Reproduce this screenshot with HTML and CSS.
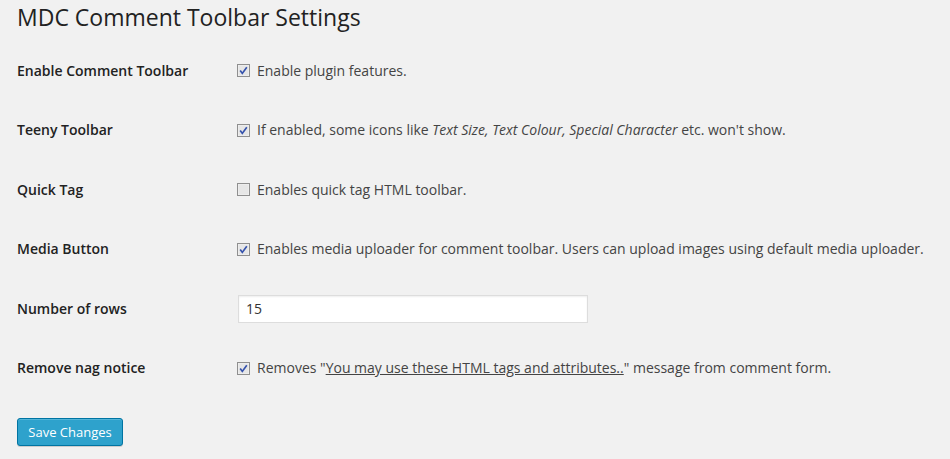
FILE: index.html
```html
<!DOCTYPE html>
<html>
<head>
<meta charset="utf-8">
<link rel="stylesheet" href="styles.css">
</head>
<body>
<div class="wrap">
  <h2 class="title">MDC Comment Toolbar Settings</h2>
  <div class="form">
    <div class="row">
      <div class="label">Enable Comment Toolbar</div>
      <div class="field">
        <svg class="cb" width="13" height="13" viewBox="0 0 13 13"><rect x="0.5" y="0.5" width="12" height="12" fill="#f2f2f2" stroke="#8f8f8f"/><rect x="1.5" y="1.5" width="10" height="10" fill="#e6e6e6"/><path d="M3.2 6.6 L5.3 9.4 L9.8 3.2" fill="none" stroke="#3552ac" stroke-width="1.7"/></svg>
        <span>Enable plugin features.</span>
      </div>
    </div>
    <div class="row">
      <div class="label">Teeny Toolbar</div>
      <div class="field">
        <svg class="cb" width="13" height="13" viewBox="0 0 13 13"><rect x="0.5" y="0.5" width="12" height="12" fill="#f2f2f2" stroke="#8f8f8f"/><rect x="1.5" y="1.5" width="10" height="10" fill="#e6e6e6"/><path d="M3.2 6.6 L5.3 9.4 L9.8 3.2" fill="none" stroke="#3552ac" stroke-width="1.7"/></svg>
        <span>If enabled, some icons like <em>Text Size, Text Colour, Special Character</em> etc. won't show.</span>
      </div>
    </div>
    <div class="row">
      <div class="label">Quick Tag</div>
      <div class="field">
        <svg class="cb" width="13" height="13" viewBox="0 0 13 13"><rect x="0.5" y="0.5" width="12" height="12" fill="#f2f2f2" stroke="#8f8f8f"/><rect x="1.5" y="1.5" width="10" height="10" fill="#e6e6e6"/></svg>
        <span>Enables quick tag HTML toolbar.</span>
      </div>
    </div>
    <div class="row">
      <div class="label">Media Button</div>
      <div class="field">
        <svg class="cb" width="13" height="13" viewBox="0 0 13 13"><rect x="0.5" y="0.5" width="12" height="12" fill="#f2f2f2" stroke="#8f8f8f"/><rect x="1.5" y="1.5" width="10" height="10" fill="#e6e6e6"/><path d="M3.2 6.6 L5.3 9.4 L9.8 3.2" fill="none" stroke="#3552ac" stroke-width="1.7"/></svg>
        <span>Enables media uploader for comment toolbar. Users can upload images using default media uploader.</span>
      </div>
    </div>
    <div class="row">
      <div class="label">Number of rows</div>
      <div class="field">
        <div class="input">15</div>
      </div>
    </div>
    <div class="row">
      <div class="label">Remove nag notice</div>
      <div class="field">
        <svg class="cb" width="13" height="13" viewBox="0 0 13 13"><rect x="0.5" y="0.5" width="12" height="12" fill="#f2f2f2" stroke="#8f8f8f"/><rect x="1.5" y="1.5" width="10" height="10" fill="#e6e6e6"/><path d="M3.2 6.6 L5.3 9.4 L9.8 3.2" fill="none" stroke="#3552ac" stroke-width="1.7"/></svg>
        <span>Removes "<a class="lnk" href="#">You may use these HTML tags and attributes..</a>" message from comment form.</span>
      </div>
    </div>
  </div>
  <div class="submit">
    <button class="btn">Save Changes</button>
  </div>
</div>
</body>
</html>
```
FILE: styles.css
```css
html, body {
  margin: 0;
  padding: 0;
  background: #f1f1f1;
}
body {
  font-family: "Open Sans", "Noto Sans", sans-serif;
  font-size: 14px;
  color: #444;
  width: 950px;
  height: 459px;
  overflow: hidden;
}
.wrap {
  padding-left: 17px;
}
.title {
  margin: 0;
  padding-top: 3px;
  height: 38px;
  font-size: 23px;
  font-weight: 400;
  line-height: 29px;
  color: #222;
}
.form {
  display: flex;
  flex-direction: column;
}
.row {
  display: flex;
  align-items: center;
  height: 59.5px;
}
.label {
  width: 221px;
  flex: none;
  font-weight: 600;
  color: #222;
  line-height: 20px;
}
.field {
  display: flex;
  align-items: center;
  line-height: 20px;
}
.cb {
  flex: none;
  margin-left: -1px;
  margin-right: 7px;
  display: block;
}
.field em {
  font-style: italic;
}
.lnk {
  color: #444;
  text-decoration: underline;
}
.input {
  box-sizing: border-box;
  width: 350px;
  height: 28px;
  background: #fff;
  border: 1px solid #ddd;
  box-shadow: inset 0 1px 2px rgba(0,0,0,0.07);
  padding: 0 7px;
  line-height: 26px;
  color: #333;
}
.submit {
  padding-top: 20px;
}
.btn {
  box-sizing: border-box;
  width: 106px;
  height: 28px;
  background: #2ea2cc;
  border: 1px solid #0074a2;
  border-radius: 3px;
  box-shadow: inset 0 1px 0 rgba(120,200,230,0.5), 0 1px 0 rgba(0,0,0,0.15);
  color: #fff;
  font-family: "Open Sans", "Noto Sans", sans-serif;
  font-size: 13px;
  line-height: 26px;
  padding: 0;
  cursor: pointer;
}
```
